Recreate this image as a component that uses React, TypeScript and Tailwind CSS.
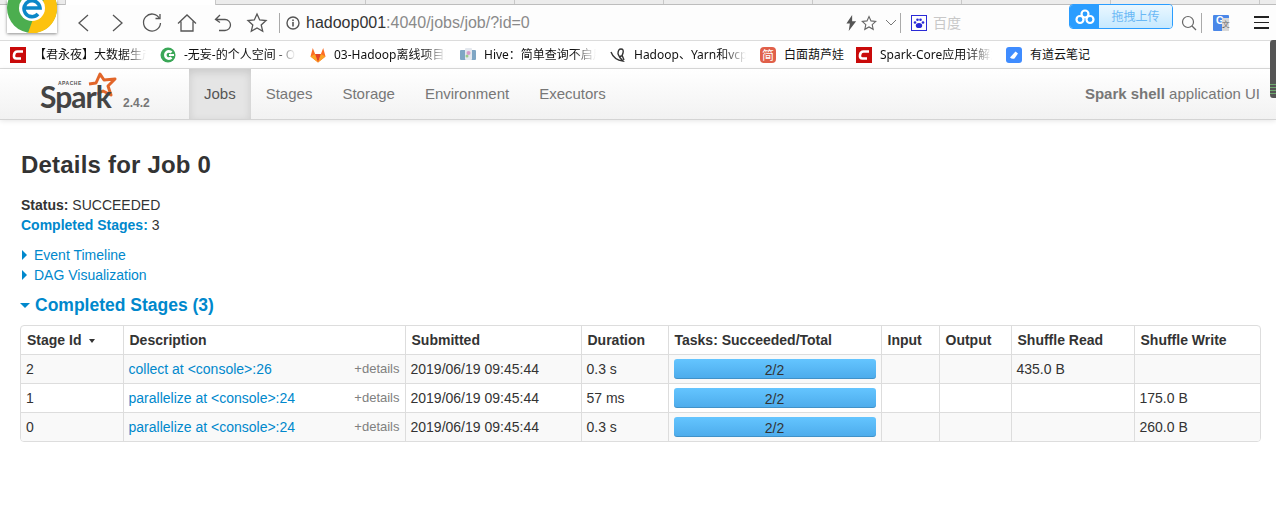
import { ReactNode } from "react";

const bookmarks = [
  { label: "【君永夜】大数据生产", icon: "csdn", width: 150 },
  { label: "-无妄-的个人空间 - OSCHINA", icon: "osc", width: 150 },
  { label: "03-Hadoop离线项目实战", icon: "gitlab", width: 150 },
  { label: "Hive：简单查询不启用MR", icon: "hive", width: 150 },
  { label: "Hadoop、Yarn和vcpu", icon: "bird", width: 150 },
  { label: "白面葫芦娃", icon: "jian", width: 96 },
  { label: "Spark-Core应用详解之", icon: "csdn", width: 150 },
  { label: "有道云笔记", icon: "note", width: 96 },
];

const stages = [
  { id: "2", desc: "collect at <console>:26", duration: "0.3 s", read: "435.0 B", write: "" },
  { id: "1", desc: "parallelize at <console>:24", duration: "57 ms", read: "", write: "175.0 B" },
  { id: "0", desc: "parallelize at <console>:24", duration: "0.3 s", read: "", write: "260.0 B" },
];

const BookmarkIcon = ({ type }: { type: string }) => {
  if (type === "csdn") {
    return (
      <svg width="16" height="16" viewBox="0 0 16 16" className="shrink-0">
        <rect width="16" height="16" fill="#c90a0a" />
        <path d="M13 4.500H7.500Q4.500 4.500 4 8T6.500 11.500H11" fill="none" stroke="#fff" strokeWidth="2.600" />
      </svg>
    );
  }
  if (type === "osc") {
    return (
      <svg width="16" height="16" viewBox="0 0 16 16" className="shrink-0">
        <circle cx="8" cy="8" r="7.500" fill="#3aa757" />
        <path d="M11.500 5.500A3.600 3.600 0 1 0 11.500 10.500" fill="none" stroke="#fff" strokeWidth="2.600" />
        <rect x="9" y="7" width="5" height="2" fill="#fff" />
      </svg>
    );
  }
  if (type === "gitlab") {
    return (
      <svg width="16" height="16" viewBox="0 0 16 16" className="shrink-0">
        <path d="M8 15.500L.5 9.500 2.800 1l2.300 6h5.800l2.300-6 2.300 8.500z" fill="#fc6d26" />
        <path d="M8 15.500L5.100 7h5.800z" fill="#e24329" />
        <path d="M.5 9.500L5.100 7 8 15.500zM15.500 9.500L10.900 7 8 15.500z" fill="#fca326" />
      </svg>
    );
  }
  if (type === "hive") {
    return (
      <svg width="16" height="16" viewBox="0 0 16 16" className="shrink-0">
        <rect y="3" width="16" height="10" rx="1" fill="#7fa6c4" />
        <rect x="5" y="1" width="7" height="12" rx="1" fill="#e4e8ee" />
        <circle cx="8.500" cy="6" r="2" fill="#d79ac9" />
        <circle cx="7" cy="9" r="1.500" fill="#9ccb8a" />
      </svg>
    );
  }
  if (type === "bird") {
    return (
      <svg width="16" height="16" viewBox="0 0 16 16" className="shrink-0">
        <path d="M1 5Q4 13 13 14 9 10 8 7M8 7Q8 2 11 2T13 6 10 9M12 8L14 13" fill="none" stroke="#333" strokeWidth="1.400" />
      </svg>
    );
  }
  if (type === "jian") {
    return (
      <div className="w-4 h-4 shrink-0 rounded-sm bg-[#e0604a] text-white text-[12px] leading-4 text-center font-['Noto_Sans_CJK_SC',sans-serif]">
        简
      </div>
    );
  }
  return (
    <svg width="16" height="16" viewBox="0 0 16 16" className="shrink-0">
      <rect width="16" height="16" rx="3" fill="#3f8cff" />
      <path d="M4 10.500L9.500 4.500 12 6.500 8.500 11.500Q6 12.500 4 10.500z" fill="#fff" />
    </svg>
  );
};

const ToolIcon = ({ children, width = 22 }: { children: ReactNode; width?: number }) => (
  <svg
    width={width}
    height="22"
    viewBox={`0 0 ${width} 22`}
    fill="none"
    stroke="#555"
    strokeWidth="1.300"
    className="shrink-0"
  >
    {children}
  </svg>
);

const Th = ({ children, className = "" }: { children?: ReactNode; className?: string }) => (
  <th className={`border border-[#ddd] border-t-0 pl-[6px] pr-[5px] pt-[2px] text-left font-bold h-[28px] ${className}`}>{children}</th>
);

const Td = ({ children }: { children?: ReactNode }) => (
  <td className="border border-[#ddd] px-[5px] pt-[2px] h-[29px] align-middle">{children}</td>
);

export default function App() {
  return (
    <div className="relative w-[1276px] h-[526px] overflow-hidden bg-white text-[#333] font-['Liberation_Sans',Arial,sans-serif] text-[14px]">
      {/* Browser logo */}
      <div className="absolute left-[7px] top-0 w-[50px] h-[33px] bg-white shadow-[0_1px_3px_rgba(0,0,0,0.45)] overflow-hidden z-10">
        <svg width="50" height="33" viewBox="0 0 50 33">
          <circle cx="25" cy="8" r="25" fill="#4cae4f" />
          <path d="M21 33L30 8 44 -8A25 25 0 0 1 21 33z" fill="#fdc20e" />
          <path d="M14 -8L25 8 44 -8z" fill="#e53e30" />
          <circle cx="25" cy="8" r="13" fill="#fff" />
          <path d="M17 8H33A8 8 0 1 0 31 14" fill="none" stroke="#0b88c8" strokeWidth="3.600" />
        </svg>
      </div>

      {/* Tab strip */}
      <div className="h-[5px] flex pl-[65px] bg-[#ececec] border-b border-[#bdbdbd]">
        <div className="w-[151px] h-[5px] bg-white border-x border-[#c8c8c8]" />
        <div className="w-[150px] h-full border-r border-[#c8c8c8]" />
        {[149, 149, 149, 149, 149, 149].map((w, i) => (
          <div key={i} style={{ width: w }} className="h-full border-r border-[#c8c8c8]" />
        ))}
      </div>

      {/* Toolbar */}
      <div className="h-[36px] bg-[#fdfdfd] border-b border-[#dcdcdc] flex items-center relative">
        <div className="flex items-center pl-[66px]">
          <div className="w-[34px] flex justify-center">
            <ToolIcon>
              <path d="M16 3L7 11l9 8" />
            </ToolIcon>
          </div>
          <div className="w-[35px] flex justify-center">
            <ToolIcon>
              <path d="M6 3l9 8-9 8" />
            </ToolIcon>
          </div>
          <div className="w-[34px] flex justify-center">
            <ToolIcon>
              <path d="M18.500 6.500A8.500 8.500 0 1 0 19.500 11" />
              <path d="M14.500 6.500h4.500V2" />
            </ToolIcon>
          </div>
          <div className="w-[36px] flex justify-center">
            <ToolIcon>
              <path d="M2 11.500L11 3l9 8.500M5 9.500V19h12V9.500" />
            </ToolIcon>
          </div>
          <div className="w-[35px] flex justify-center">
            <ToolIcon>
              <path d="M8 3L3.500 7.500 8 10.500M4 7.500H13A5.500 5.500 0 0 1 13 18.500H7" />
            </ToolIcon>
          </div>
          <div className="w-[33px] flex justify-center">
            <ToolIcon>
              <path d="M11 2l2.700 6 6.300.6-4.800 4.300 1.500 6.300L11 16l-5.700 3.200 1.500-6.300L2 8.600 8.300 8z" />
            </ToolIcon>
          </div>
          <div className="ml-[6px] w-px h-[20px] bg-[#aaa]" />
          <svg width="14" height="14" viewBox="0 0 14 14" className="ml-[6px]">
            <circle cx="7" cy="7" r="6" fill="none" stroke="#555" strokeWidth="1.400" />
            <rect x="6.200" y="6" width="1.600" height="4.500" fill="#555" />
            <rect x="6.200" y="3.500" width="1.600" height="1.600" fill="#555" />
          </svg>
          <div className="ml-[6px] text-[16px] text-[#8a8a8a] leading-none">
            <span className="text-[#333]">hadoop001</span>:4040/jobs/job/?id=0
          </div>
        </div>

        <div className="ml-auto flex items-center pr-[6px]">
          <svg width="12" height="16" viewBox="0 0 10 14">
            <path d="M6 0L1 7.500h3L3 14 9.500 5.500H6z" fill="#555" />
          </svg>
          <svg width="16" height="16" viewBox="0 0 16 16" className="ml-[4px]" fill="none" stroke="#666" strokeWidth="1.100">
            <path d="M8 1.500l2 4.400 4.700.5-3.500 3.200 1 4.700L8 11.900l-4.200 2.400 1-4.700-3.500-3.200L6 5.900z" />
          </svg>
          <svg width="12" height="8" viewBox="0 0 12 8" className="ml-[8px]" fill="none" stroke="#777" strokeWidth="1">
            <path d="M1 1l5 5 5-5" />
          </svg>
          <div className="ml-[3px] w-px h-[20px] bg-[#aaa]" />
          <div className="ml-[10px] w-4 h-4 border border-[#2a2ad6] flex items-center justify-center">
            <svg width="12" height="12" viewBox="0 0 12 12" fill="#2a2ad6">
              <ellipse cx="6" cy="8.500" rx="3.200" ry="2.600" />
              <circle cx="2" cy="5.500" r="1.300" />
              <circle cx="10" cy="5.500" r="1.300" />
              <circle cx="4.500" cy="2.800" r="1.300" />
              <circle cx="7.500" cy="2.800" r="1.300" />
            </svg>
          </div>
          <span className="ml-[6px] w-[137px] text-[14px] text-[#c8c8c8] font-['Noto_Sans_CJK_SC',sans-serif]">百度</span>
          <div className="w-[104px] h-0" />
          <svg width="18" height="18" viewBox="0 0 18 18" className="ml-[6px]" fill="none" stroke="#666" strokeWidth="1.200">
            <circle cx="8" cy="8" r="5.500" />
            <path d="M12 12l4 4" />
          </svg>
          <div className="ml-[3px] w-px h-[20px] bg-[#aaa]" />
          <div className="ml-[11px] relative w-4 h-4 bg-[#4a87e8] rounded-[1px]">
            <span className="absolute left-[3px] top-[1px] text-white text-[10px] font-bold leading-none">G</span>
            <div className="absolute left-[9px] top-[3px] w-[7px] h-[13px] bg-[#d8d8d8] text-[8px] leading-[13px] text-center text-[#666]">文</div>
          </div>
          <div className="ml-[25px] mr-[1px] w-[15px] flex flex-col gap-[4px]">
            <div className="h-[1.500px] bg-[#222]" />
            <div className="h-[1.500px] bg-[#222]" />
            <div className="h-[1.500px] bg-[#222]" />
          </div>
        </div>
      </div>

      {/* Cloud upload button sits over the toolbar */}
      <div className="absolute left-[1069px] top-[4px] w-[104px] h-[25px] rounded-[4px] border border-[#2a9dff] flex overflow-hidden z-10">
        <div className="w-[29px] bg-[#2a9dff] flex items-center justify-center">
          <svg width="20" height="16" viewBox="0 0 20 16" fill="none" stroke="#fff" strokeWidth="2.200">
            <circle cx="10" cy="5" r="3.500" />
            <circle cx="5" cy="10.500" r="3.500" />
            <circle cx="15" cy="10.500" r="3.500" />
          </svg>
        </div>
        <div className="flex-1 bg-gradient-to-b from-[#eaf7ff] to-[#c6e9ff] text-[#6ab8f5] text-[12px] text-center leading-[22px] font-['Noto_Sans_CJK_SC',sans-serif]">
          拖拽上传
        </div>
      </div>

      {/* Bookmarks */}
      <div className="h-[28px] bg-white border-b border-[#dcdcdc] flex items-center pl-[10px] text-[12px] text-[#111] font-['Noto_Sans','Noto_Sans_CJK_SC',sans-serif]">
        {bookmarks.map((b, i) => (
          <div key={i} style={{ width: b.width }} className="flex items-center gap-[8px] shrink-0">
            <BookmarkIcon type={b.icon} />
            {b.width === 150 ? (
              <span className="w-[112px] overflow-hidden whitespace-nowrap [mask-image:linear-gradient(to_right,#000_80%,transparent)]">
                {b.label}
              </span>
            ) : (
              <span className="whitespace-nowrap">{b.label}</span>
            )}
          </div>
        ))}
      </div>

      {/* Spark nav */}
      <div className="h-[51px] bg-gradient-to-b from-white to-[#f2f2f2] border-b border-[#d4d4d4] shadow-[0_1px_5px_rgba(0,0,0,0.1)] flex items-stretch">
        <div className="w-[189px] relative shrink-0">
          <svg width="40" height="32" viewBox="0 0 40 32" className="absolute left-[80px] top-[3px]">
            <path
              d="M9 12L16 11 20 2 24 8 35 7 28 14 31 23 23 19 17 22"
              fill="none"
              stroke="#e2662a"
              strokeWidth="3"
              strokeLinejoin="round"
            />
          </svg>
          <span className="absolute left-[40px] top-[17px] text-[30px] leading-[20px] font-bold tracking-[-1px] text-[#444] font-['Lato',sans-serif]">
            Spark
          </span>
          <span className="absolute left-[58px] top-[11px] text-[5px] leading-[6px] font-bold tracking-[0.5px] text-[#555]">
            APACHE
          </span>
          <span className="absolute left-[123px] top-[28px] text-[12px] font-bold text-[#777] leading-none">2.4.2</span>
        </div>
        <div className="flex text-[15px] text-[#777]">
          <a className="px-[15px] flex items-center bg-[#e5e5e5] text-[#555] shadow-[inset_0_3px_8px_rgba(0,0,0,0.125)]">Jobs</a>
          <a className="px-[15px] flex items-center">Stages</a>
          <a className="px-[15px] flex items-center">Storage</a>
          <a className="px-[15px] flex items-center">Environment</a>
          <a className="px-[15px] flex items-center">Executors</a>
        </div>
        <p className="ml-auto mr-[16px] self-center text-[15px] text-[#777]">
          <strong>Spark shell</strong> application UI
        </p>
      </div>

      {/* Page scrollbar */}
      <div className="absolute left-[1270px] top-[40px] w-[6px] h-[58px] bg-[#555] rounded-l-[3px] z-10">
        <div className="absolute bottom-[3px] left-0 w-full h-[11px] bg-[repeating-linear-gradient(to_bottom,#6fa86f_0,#6fa86f_1px,#555_1px,#555_3px)]" />
      </div>

      {/* Page content */}
      <div className="px-[21px] pt-[30px]">
        <h3 className="text-[24px] leading-[30px] font-bold tracking-[0.2px] text-[#333]">Details for Job 0</h3>
        <ul className="mt-[15px] leading-[20px]">
          <li>
            <strong>Status:</strong> SUCCEEDED
          </li>
          <li>
            <strong className="text-[#0088cc]">Completed Stages:</strong> 3
          </li>
        </ul>
        <div className="mt-[10px] leading-[20px] text-[#0088cc]">
          <div className="flex items-center">
            <span className="w-0 h-0 border-y-[5px] border-y-transparent border-l-[5px] border-l-[#0088cc] ml-[1px] mr-[7px]" />
            Event Timeline
          </div>
          <div className="flex items-center">
            <span className="w-0 h-0 border-y-[5px] border-y-transparent border-l-[5px] border-l-[#0088cc] ml-[1px] mr-[7px]" />
            DAG Visualization
          </div>
        </div>
        <h4 className="mt-[10px] flex items-center text-[17.5px] leading-[20px] font-bold text-[#0088cc]">
          <span className="w-0 h-0 border-x-[5px] border-x-transparent border-t-[5px] border-t-[#0088cc] -ml-px mr-[5px]" />
          Completed Stages (3)
        </h4>
      </div>

      {/* Stage table */}
      <div className="mx-[20px] mt-[10px] w-[1241px] border border-[#ddd] rounded-[4px] overflow-hidden">
        <table className="w-[1241px] table-fixed border-collapse border-hidden">
          <colgroup>
            <col className="w-[102px]" />
            <col className="w-[282px]" />
            <col className="w-[176px]" />
            <col className="w-[87px]" />
            <col className="w-[213px]" />
            <col className="w-[58px]" />
            <col className="w-[72px]" />
            <col className="w-[123px]" />
            <col />
          </colgroup>
          <thead>
            <tr>
              <Th>
                Stage Id
                <span className="inline-block w-0 h-0 ml-[8px] mb-[2px] border-x-[3px] border-x-transparent border-t-[4px] border-t-[#333]" />
              </Th>
              <Th>Description</Th>
              <Th>Submitted</Th>
              <Th>Duration</Th>
              <Th>Tasks: Succeeded/Total</Th>
              <Th>Input</Th>
              <Th>Output</Th>
              <Th>Shuffle Read</Th>
              <Th>Shuffle Write</Th>
            </tr>
          </thead>
          <tbody>
            {stages.map((s, i) => (
              <tr key={s.id} className={i % 2 === 0 ? "bg-[#f9f9f9]" : "bg-white"}>
                <Td>{s.id}</Td>
                <Td>
                  <div className="flex items-center justify-between">
                    <span className="text-[#0088cc]">{s.desc}</span>
                    <span className="text-[13px] text-[#808080] mb-[2px]">+details</span>
                  </div>
                </Td>
                <Td>2019/06/19 09:45:44</Td>
                <Td>{s.duration}</Td>
                <Td>
                  <div className="-mt-[2px] h-[20px] rounded-[3px] bg-gradient-to-b from-[#64c5ff] to-[#4cabeb] shadow-[inset_0_-1px_0_rgba(0,0,0,0.15)] text-center leading-[22px]">
                    2/2
                  </div>
                </Td>
                <Td />
                <Td />
                <Td>{s.read}</Td>
                <Td>{s.write}</Td>
              </tr>
            ))}
          </tbody>
        </table>
      </div>
    </div>
  );
}
